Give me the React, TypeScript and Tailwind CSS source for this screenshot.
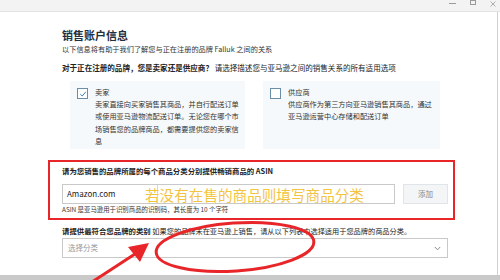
import React from "react";

const cjk = { fontFamily: '"Noto Sans CJK SC", "Noto Sans", sans-serif' };

function Check({ checked }: { checked: boolean }) {
  return (
    <div className="w-[11px] h-[11px] shrink-0 border border-[#6b8ea8] bg-white flex items-center justify-center">
      {checked && (
        <svg width="8" height="8" viewBox="0 0 8 8">
          <path d="M1.3 4.2 L3.2 6 L6.8 1.8" fill="none" stroke="#3a7fb8" strokeWidth="1" />
        </svg>
      )}
    </div>
  );
}

export default function App() {
  return (
    <div className="relative w-[500px] h-[280px] overflow-hidden bg-white text-[#2b2b2b]" style={cjk}>
      {/* window top bar */}
      <div className="h-[12px] bg-[#f3f3f3] border-b border-[#e4e4e4] flex items-start justify-end pr-[4px] gap-[14px]">
        <div className="w-[7px] h-[1px] bg-[#9a9a9a] mt-[3px]" />
        <div className="w-[6px] h-[5px] border border-[#9a9a9a]" />
        <svg width="6" height="6" viewBox="0 0 6 6" className="mt-[1px]">
          <path d="M0.5 0.5 L5.5 5.5 M5.5 0.5 L0.5 5.5" stroke="#9a9a9a" strokeWidth="0.8" />
        </svg>
      </div>
      <div className="flex h-[263px]">
        <div className="flex-1 border-r border-[#d0d0d0] pl-[62px] pt-[16px]">
          <div className="text-[11px] leading-[14px] font-bold text-[#232f3e]">销售账户信息</div>
          <div className="text-[7.2px] leading-[10px] mt-[2px] text-[#333] whitespace-nowrap">
            以下信息将有助于我们了解您与正在注册的品牌 Falluk 之间的关系
          </div>
          <div className="text-[7.55px] leading-[10px] mt-[9px] text-[#222] whitespace-nowrap">
            <span className="font-bold">对于正在注册的品牌，您是卖家还是供应商？</span> 请选择描述您与亚马逊之间的销售关系的所有适用选项
          </div>
          <div className="flex gap-[18px] ml-[8px] mt-[8px]">
            <div className="w-[175px] h-[68px] bg-[#f6f9fb] flex gap-[7px] pl-[7px] pt-[7px]">
              <Check checked />
              <div className="w-[146px] text-[7.2px] leading-[12.2px] text-[#333] -mt-[2px]">
                <div>卖家</div>
                <div>卖家直接向买家销售其商品，并自行配送订单或使用亚马逊物流配送订单。无论您在哪个市场销售您的品牌商品，都需要提供您的卖家信息</div>
              </div>
            </div>
            <div className="w-[177px] h-[68px] bg-[#f6f9fb] flex gap-[7px] pl-[7px] pt-[7px]">
              <Check checked={false} />
              <div className="w-[148px] text-[7.2px] leading-[12.2px] text-[#333] -mt-[2px]">
                <div>供应商</div>
                <div>供应商作为第三方向亚马逊销售其商品，通过亚马逊运营中心存储和配送订单</div>
              </div>
            </div>
          </div>
          <div className="text-[7.4px] leading-[10px] mt-[17px] font-bold text-[#222] whitespace-nowrap">
            请为您销售的品牌所属的每个商品分类分别提供畅销商品的 ASIN
          </div>
          <div className="flex gap-[8px] mt-[8px] w-[386px]">
            <div className="w-[333px] h-[20px] border border-[#c9c9c9] bg-white flex">
              <div className="w-[95px] border-r border-[#d6d6d6] pl-[4px] flex items-center text-[8px] text-[#222]">
                Amazon.com
              </div>
              <div className="flex-1" />
            </div>
            <div className="w-[45px] h-[20px] bg-[#f3f5f7] border border-[#e1e4e8] flex items-center justify-center text-[7.5px] text-[#888]">
              添加
            </div>
          </div>
          <div className="text-[6.4px] leading-[10px] mt-[1px] text-[#333] whitespace-nowrap">
            ASIN 是亚马逊用于识别商品的识别码，其长度为 10 个字符
          </div>
          <div className="text-[7.2px] leading-[10px] mt-[11px] text-[#222] whitespace-nowrap">
            <span className="font-bold text-[7.4px]">请提供最符合您品牌的类别</span> 如果您的品牌未在亚马逊上销售，请从以下列表中选择适用于您品牌的商品分类。
          </div>
          <div className="w-[386px] h-[20px] mt-[2px] border border-[#c9c9c9] flex items-center justify-between pl-[5px] pr-[6px]">
            <span className="text-[7.5px] text-[#999]">选择分类</span>
            <svg width="7" height="5" viewBox="0 0 7 5">
              <path d="M0.8 1 L3.5 3.8 L6.2 1" fill="none" stroke="#888" strokeWidth="1" />
            </svg>
          </div>
        </div>
        <div className="w-[2px]" />
      </div>
      <div className="h-[5px] bg-[#c9c9c9]" />

      {/* annotations */}
      <div className="absolute left-[48px] top-[160px] w-[407px] h-[60px] border-2 border-[#e8262a]" />
      <div className="absolute left-[145px] top-[184px] text-[14.6px] leading-[21px] text-[#f3c43f] whitespace-nowrap">
        若没有在售的商品则填写商品分类
      </div>
      <svg className="absolute left-0 top-0" width="500" height="280" viewBox="0 0 500 280">
        <ellipse cx="235" cy="247" rx="79" ry="24" fill="none" stroke="#e8262a" strokeWidth="3" transform="rotate(-4 235 247)" />
        <line x1="92" y1="282" x2="138" y2="252" stroke="#e8262a" strokeWidth="3" />
        <polygon points="149,243 128,247 140,262" fill="#e8262a" />
      </svg>
    </div>
  );
}
